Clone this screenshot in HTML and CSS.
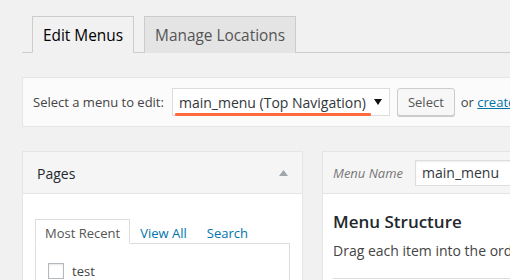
FILE: index.html
```html
<!DOCTYPE html>
<html lang="en">
  <head>
    <meta charset="UTF-8" />
    <meta name="viewport" content="width=device-width, initial-scale=1.0" />
    <title>Menus</title>
    <link rel="stylesheet" href="styles.css">
  </head>
  <body>
    <div class="wrap">
      <h2 class="nav-tab-wrapper">
        <a class="nav-tab nav-tab-active" href="#">Edit Menus</a>
        <a class="nav-tab" href="#">Manage Locations</a>
      </h2>

      <div class="manage-menus">
        <label class="menu-label" for="select-menu">Select a menu to edit:</label>
        <div class="menu-select" id="select-menu">
          <span>main_menu (Top Navigation)</span>
          <svg class="arrow" width="8" height="6" viewBox="0 0 8 6"><path d="M0 0h8L4 6z" fill="#111"/></svg>
          <span class="mark"></span>
        </div>
        <button type="button" class="button">Select</button>
        <span class="or">or <a href="#">create a new menu</a>.</span>
      </div>

      <div class="columns">
        <div class="side">
          <div class="postbox">
            <div class="postbox-head">
              <h3>Pages</h3>
              <svg width="9" height="6" viewBox="0 0 9 6"><path d="M4.5 0L9 6H0z" fill="#a0a5aa"/></svg>
            </div>
            <div class="postbox-body">
              <ul class="tabs">
                <li class="tab tab-active">Most Recent</li>
                <li class="tab"><a href="#">View All</a></li>
                <li class="tab"><a href="#">Search</a></li>
              </ul>
              <div class="tabs-panel">
                <label class="item"><span class="checkbox"></span>test</label>
              </div>
            </div>
          </div>
        </div>

        <div class="menu-edit">
          <div class="menu-head">
            <label class="name-label" for="menu-name">Menu Name</label>
            <input type="text" id="menu-name" class="menu-name" value="main_menu" />
          </div>
          <div class="menu-body">
            <h3>Menu Structure</h3>
            <p>Drag each item into the order you prefer. Click the arrow on the right of the item to reveal additional configuration options.</p>
            <div class="menu-items"></div>
          </div>
        </div>
      </div>
    </div>
  </body>
</html>
```

FILE: styles.css
```css
body {
  margin: 0;
  background: #f1f1f1;
  font-family: "Open Sans", "Liberation Sans", sans-serif;
  font-size: 13px;
  color: #444;
  overflow: hidden;
}
a {
  color: #0073aa;
}
.wrap {
  width: 1000px;
  padding-left: 22px;
}
.nav-tab-wrapper {
  display: flex;
  margin: 0;
  padding: 16px 0 0 10px;
  border-bottom: 1px solid #ccc;
  font-weight: normal;
  line-height: 24px;
}
.nav-tab {
  display: block;
  margin: 0 10px -1px 0;
  padding: 7px 10px 5px;
  border: 1px solid #ccc;
  border-bottom: none;
  background: #e4e4e4;
  color: #555;
  font-size: 15.4px;
  line-height: 24px;
  text-decoration: none;
  white-space: nowrap;
}
.nav-tab-active {
  background: #f1f1f1;
  color: #000;
  border-bottom: 1px solid #f1f1f1;
  padding-bottom: 4px;
}
.manage-menus {
  display: flex;
  align-items: center;
  margin-top: 24px;
  padding: 10px;
  background: #fbfbfb;
  border: 1px solid #e5e5e5;
}
.menu-label {
  white-space: nowrap;
}
.menu-select {
  position: relative;
  display: flex;
  flex: none;
  align-items: center;
  justify-content: space-between;
  box-sizing: border-box;
  width: 218px;
  height: 28px;
  margin-left: 8px;
  padding: 0 7px 0 6px;
  background: #fff;
  border: 1px solid #ddd;
  color: #32373c;
  font-size: 14px;
  white-space: nowrap;
}
.menu-select .mark {
  position: absolute;
  left: 2px;
  bottom: -1px;
  width: 196px;
  height: 3px;
  border-radius: 1px;
  background: #ff6b3d;
}
.button {
  flex: none;
  box-sizing: border-box;
  height: 28px;
  margin-left: 7px;
  padding: 0 10px;
  background: #f7f7f7;
  border: 1px solid #ccc;
  border-radius: 3px;
  box-shadow: 0 1px 0 #ccc;
  color: #555;
  font-family: inherit;
  font-size: 13px;
}
.or {
  margin-left: 6px;
  white-space: nowrap;
}
.columns {
  display: flex;
  align-items: flex-start;
  margin-top: 24px;
}
.side {
  flex: none;
  width: 281px;
  margin-right: 19px;
}
.postbox {
  background: #fff;
  border: 1px solid #e5e5e5;
}
.postbox-head {
  display: flex;
  align-items: center;
  justify-content: space-between;
  height: 42px;
  box-sizing: border-box;
  padding: 0 14px 0 14px;
  background: #f5f5f5;
  border-bottom: 1px solid #e5e5e5;
}
.postbox-head h3 {
  margin: 2px 0 0;
  font-size: 14px;
  font-weight: normal;
  line-height: 21px;
  color: #23282d;
}
.postbox-body {
  padding: 25px 12px 20px 12px;
}
.tabs {
  display: flex;
  margin: 0;
  padding: 0;
  list-style: none;
}
.tab {
  margin-bottom: -1px;
  padding: 3px 9px 1px;
  border: 1px solid transparent;
  border-bottom: none;
  line-height: 20px;
  white-space: nowrap;
}
.tab a {
  text-decoration: none;
}
.tab-active {
  background: #fff;
  border-color: #ddd;
  border-bottom: 1px solid #fff;
  padding-bottom: 0;
  color: #555;
}
.tabs-panel {
  height: 120px;
  padding: 18px 12px;
  border: 1px solid #ddd;
}
.item {
  display: flex;
  align-items: center;
  color: #444;
}
.checkbox {
  width: 14px;
  height: 14px;
  margin-right: 8px;
  border: 1px solid #b4b9be;
  background: #fff;
  box-shadow: inset 0 1px 2px rgba(0, 0, 0, 0.1);
}
.menu-edit {
  flex: none;
  width: 600px;
  background: #fff;
  border: 1px solid #e5e5e5;
}
.menu-head {
  display: flex;
  align-items: center;
  height: 42px;
  box-sizing: border-box;
  padding: 0 10px;
  background: #f5f5f5;
  border-bottom: 1px solid #e5e5e5;
}
.name-label {
  margin-right: 12px;
  font-style: italic;
  color: #777;
}
.menu-name {
  box-sizing: border-box;
  width: 300px;
  height: 26px;
  padding: 0 6px;
  border: 1px solid #ddd;
  box-shadow: inset 0 1px 2px rgba(0, 0, 0, 0.07);
  font-family: inherit;
  font-size: 14px;
  color: #32373c;
}
.menu-body {
  padding: 16px 10px 20px;
}
.menu-body h3 {
  margin: 0;
  font-size: 17px;
  font-weight: 600;
  line-height: 24px;
  color: #23282d;
}
.menu-body p {
  margin: 7px 0 0;
  font-size: 14px;
  line-height: 20px;
  white-space: nowrap;
}
.menu-items {
  height: 40px;
  margin-top: 17px;
  border-top: 1px solid #ddd;
}
```
